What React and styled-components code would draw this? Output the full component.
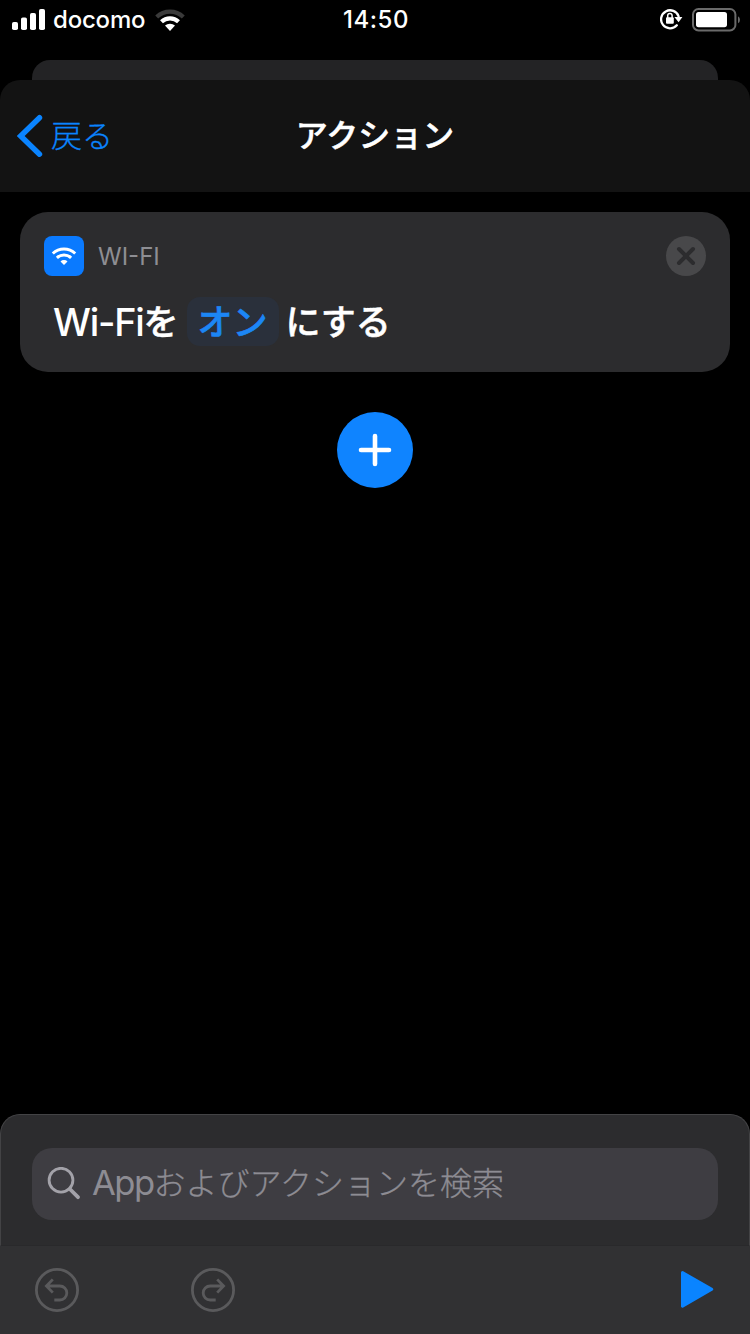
import React from 'react'
import styled, { createGlobalStyle } from 'styled-components'

function App() {
    return (
        <>
            <GlobalStyle />
            <Screen>
                <StatusBar>
                    <StatusLeft>
                        <SignalIcon />
                        <Carrier>docomo</Carrier>
                        <StatusWifi />
                    </StatusLeft>
                    <Time>14:50</Time>
                    <StatusRight>
                        <LockIcon />
                        <BatteryIcon />
                    </StatusRight>
                </StatusBar>
                <BackSheet />
                <Sheet>
                    <Header>
                        <BackButton>
                            <svg width="26" height="44" viewBox="0 0 26 44">
                                <path d="M22.5 3.7 L3.7 22 L22.5 40.2" fill="none" stroke="currentColor" strokeWidth="5.4" strokeLinecap="round" strokeLinejoin="miter" />
                            </svg>
                            <BackLabel>戻る</BackLabel>
                        </BackButton>
                        <Title>アクション</Title>
                    </Header>
                    <Content>
                        <ActionCard>
                            <CardTop>
                                <AppIcon><CardWifi /></AppIcon>
                                <AppName>WI-FI</AppName>
                                <CloseButton>
                                    <svg width="20" height="20" viewBox="0 0 20 20">
                                        <path d="M3 3 L17 17 M17 3 L3 17" stroke="#2c2c2e" strokeWidth="4" strokeLinecap="round" />
                                    </svg>
                                </CloseButton>
                            </CardTop>
                            <Sentence>
                                <Latin>Wi-Fi</Latin>
                                <Kana>を</Kana>
                                <Param>オン</Param>
                                <Kana>にする</Kana>
                            </Sentence>
                        </ActionCard>
                        <AddButton>
                            <svg width="34" height="34" viewBox="0 0 34 34">
                                <path d="M17 3 V31 M3 17 H31" stroke="#fff" strokeWidth="4.6" strokeLinecap="round" />
                            </svg>
                        </AddButton>
                    </Content>
                    <SearchPanel>
                        <SearchBox>
                            <svg width="34" height="34" viewBox="0 0 34 34" fill="none" stroke="#a3a2a9" strokeLinecap="round">
                                <circle cx="14" cy="13.2" r="11.9" strokeWidth="2.8" />
                                <path d="M22.8 22 L31 30.2" strokeWidth="3.8" />
                            </svg>
                            <Placeholder><Latin>App</Latin>およびアクションを検索</Placeholder>
                        </SearchBox>
                    </SearchPanel>
                    <Toolbar>
                        <ToolGroup>
                            <UndoIcon />
                            <UndoIcon $flip />
                        </ToolGroup>
                        <svg width="36" height="40" viewBox="0 0 36 40">
                            <path d="M3.5 2.5 L32.8 19.3 L3.5 36.2 Z" fill="#0a84ff" stroke="#0a84ff" strokeWidth="3" strokeLinejoin="round" />
                        </svg>
                    </Toolbar>
                </Sheet>
            </Screen>
        </>
    )
}

function SignalIcon() {
    return (
        <svg width="33" height="22" viewBox="0 0 33 22" fill="#fff">
            <rect x="0" y="14" width="6" height="8" rx="1.8" />
            <rect x="9" y="9.5" width="6" height="12.5" rx="1.8" />
            <rect x="18" y="5" width="6" height="17" rx="1.8" />
            <rect x="27" y="1" width="6" height="21" rx="1.8" />
        </svg>
    )
}

function StatusWifi() {
    return (
        <svg width="30" height="24" viewBox="0 -1.7 30 24" fill="none">
            <path d="M1.7 7.2 A19.2 19.2 0 0 1 28.3 7.2" stroke="#3a3a3a" strokeWidth="4.2" />
            <path d="M6.5 12.1 A12.4 12.4 0 0 1 23.5 12.1" stroke="#fff" strokeWidth="4.2" />
            <path d="M10 15.9 A7.4 7.4 0 0 1 20 15.9 L15 21.3 Z" fill="#fff" />
        </svg>
    )
}

function CardWifi() {
    return (
        <svg width="26" height="20" viewBox="0 0 26 20" fill="none" stroke="#fff">
            <path d="M1.8 7.5 A16.3 16.3 0 0 1 24.2 7.5" strokeWidth="3" />
            <path d="M5.9 11.8 A10.2 10.2 0 0 1 20.1 11.8" strokeWidth="3" />
            <path d="M9.5 15.4 A5 5 0 0 1 16.5 15.4 L13 19 Z" fill="#fff" stroke="none" />
        </svg>
    )
}

function LockIcon() {
    return (
        <svg width="23" height="22" viewBox="0 0 23 22" fill="none">
            <path d="M16.8 17.3 A9 9 0 1 1 18.6 8.4" stroke="#fff" strokeWidth="2.3" strokeLinecap="round" />
            <path d="M14.4 9 H22.4 L18.6 14.2 Z" fill="#fff" />
            <rect x="6" y="9.3" width="7.8" height="6.4" rx="1" fill="#fff" />
            <path d="M7.7 10 V7.6 A2.2 2.2 0 0 1 12.1 7.6 V10" stroke="#fff" strokeWidth="1.5" />
        </svg>
    )
}

function BatteryIcon() {
    return (
        <svg width="48" height="24" viewBox="0 0 48 24">
            <rect x="1" y="1" width="42.4" height="21.4" rx="5.5" fill="none" stroke="#6a6a6a" strokeWidth="2" />
            <rect x="4" y="4" width="31" height="15.2" rx="2.6" fill="#fff" />
            <path d="M46 8.2 Q48 9.2 48 11.7 Q48 14.2 46 15.2 Z" fill="#6a6a6a" />
        </svg>
    )
}

function UndoIcon({ $flip }) {
    return (
        <ToolIcon $flip={$flip} viewBox="0 0 44 44">
            <circle cx="22" cy="22" r="20.6" />
            <path d="M17.8 11.4 L11.4 18 L17.8 24.6 M11.6 18 H24.8 A7 7 0 0 1 24.8 32 H19.3" />
        </ToolIcon>
    )
}

const GlobalStyle = createGlobalStyle`
*{
    box-sizing: border-box;
}
body{
    margin: 0;
    background-color: #000;
    font-family: Inter, 'Noto Sans CJK JP', sans-serif;
}
svg{
    display: block;
    flex-shrink: 0;
}
button{
    border: none;
    padding: 0;
    background: none;
    font-family: inherit;
}
`
const Screen = styled.div`
width: 750px;
height: 1334px;
display: flex;
flex-direction: column;
overflow: hidden;
background-color: #000;
`
const StatusBar = styled.div`
height: 60px;
padding: 8px 10px 0 12px;
display: grid;
grid-template-columns: 1fr auto 1fr;
align-items: start;
color: #fff;
font-size: 24px;
line-height: 24px;
`
const StatusLeft = styled.div`
display: flex;
`
const Carrier = styled.span`
margin: 0 10px 0 8px;
font-weight: 450;
letter-spacing: -0.2px;
`
const Time = styled.span`
font-weight: 450;
letter-spacing: 0.5px;
`
const StatusRight = styled.div`
display: flex;
justify-content: flex-end;
column-gap: 9px;
`
const BackSheet = styled.div`
height: 20px;
margin: 0 32px;
border-radius: 18px 18px 0 0;
background-color: #232325;
`
const Sheet = styled.div`
flex: 1;
display: flex;
flex-direction: column;
`
const Header = styled.div`
height: 112px;
padding: 0 17px;
display: grid;
grid-template-columns: 1fr auto 1fr;
align-items: center;
border-radius: 20px 20px 0 0;
background-color: #131313;
`
const BackButton = styled.button`
display: flex;
align-items: center;
column-gap: 8px;
color: #0a84ff;
`
const BackLabel = styled.span`
font-size: 31px;
font-weight: 300;
line-height: 44px;
-webkit-text-stroke: 0.3px currentColor;
`
const Title = styled.div`
color: #fff;
font-size: 32px;
font-weight: 500;
line-height: 44px;
-webkit-text-stroke: 0.5px currentColor;
`
const Content = styled.div`
flex: 1;
padding: 20px;
display: flex;
flex-direction: column;
align-items: center;
row-gap: 40px;
`
const ActionCard = styled.div`
width: 100%;
height: 160px;
padding: 24px;
border-radius: 28px;
background-color: #2c2c2e;
`
const CardTop = styled.div`
display: flex;
align-items: center;
`
const AppIcon = styled.div`
width: 40px;
height: 40px;
display: flex;
align-items: center;
justify-content: center;
border-radius: 8px;
background-color: #0a7aff;
`
const AppName = styled.span`
flex: 1;
margin-left: 14px;
padding-top: 1px;
color: #8e8e93;
font-size: 24px;
line-height: 39px;
`
const CloseButton = styled.button`
width: 40px;
height: 40px;
display: flex;
align-items: center;
justify-content: center;
border-radius: 50%;
background-color: #48484a;
`
const Sentence = styled.div`
height: 49px;
margin: 21px 0 0 9px;
display: flex;
align-items: center;
color: #fff;
font-size: 35px;
font-weight: 500;
line-height: 47px;

> span{
    padding-top: 2px;
}
`
const Latin = styled.span`
font-size: 1.08em;
letter-spacing: -0.033em;
`
const Kana = styled.span`
-webkit-text-stroke: 0.5px currentColor;
`
const Param = styled.span`
margin: 0 7px 0 8px;
padding: 0 11px;
border-radius: 13px;
background-color: #2a303b;
color: #1c86f5;
-webkit-text-stroke: 0.6px currentColor;
`
const AddButton = styled.button`
width: 76px;
height: 76px;
display: flex;
align-items: center;
justify-content: center;
border-radius: 50%;
background-color: #0f84ff;
`
const SearchPanel = styled.div`
height: 132px;
padding: 33px 31px 0;
border: 1px solid #434345;
border-bottom-color: #29292b;
border-radius: 20px 20px 0 0;
background-color: #2c2c2e;
`
const SearchBox = styled.div`
height: 72px;
padding-left: 15px;
display: flex;
align-items: center;
column-gap: 11px;
border-radius: 20px;
background-color: #3e3d42;
`
const Placeholder = styled.span`
color: #8d8c93;
font-size: 32px;
font-weight: 300;
line-height: 70px;
padding-bottom: 2px;
-webkit-text-stroke: 0.3px currentColor;

${Latin}{
    font-weight: 400;
    letter-spacing: -0.045em;
    -webkit-text-stroke: 0;
}
`
const Toolbar = styled.div`
height: 88px;
padding: 0 35px;
display: flex;
align-items: center;
justify-content: space-between;
background-color: #313133;
`
const ToolGroup = styled.div`
display: flex;
column-gap: 112px;
`
const ToolIcon = styled.svg`
width: 44px;
height: 44px;
fill: none;
stroke: #5a5a5c;
stroke-width: 2.8;
stroke-linejoin: miter;
transform: ${props => props.$flip ? 'scaleX(-1)' : 'none'};
`
export default App
